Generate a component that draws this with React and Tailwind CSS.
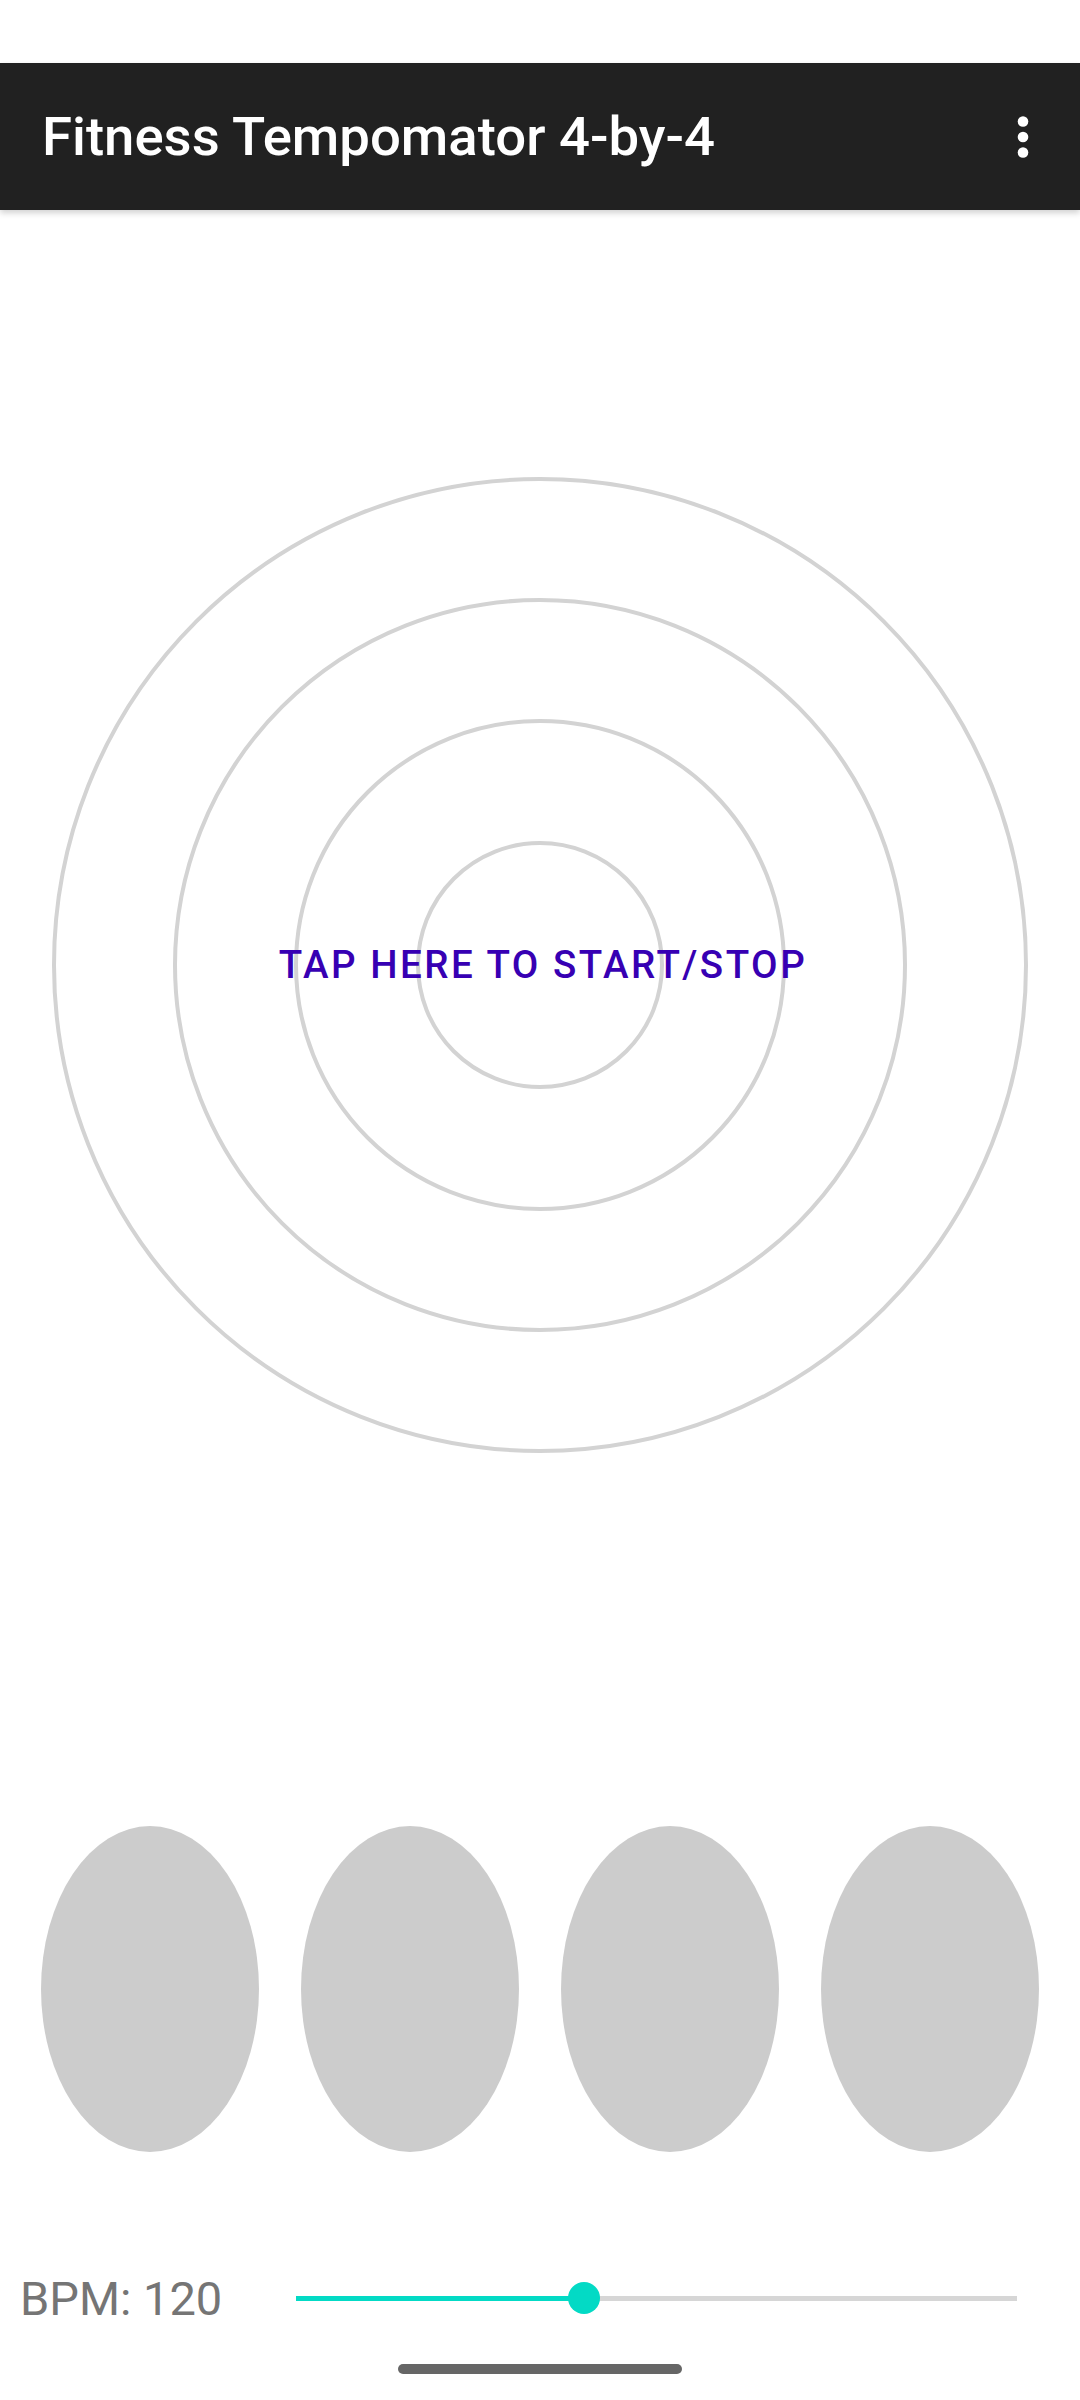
const RINGS = [486, 365, 244, 122];
const BEATS = [0, 1, 2, 3];

function Rings() {
  return (
    <svg width="976" height="976" viewBox="0 0 976 976" className="block">
      {RINGS.map(r => (
        <circle key={r} cx="488" cy="488" r={r} fill="none" stroke="#d3d3d3" strokeWidth="4" />
      ))}
    </svg>
  );
}

function MoreIcon() {
  return (
    <svg width="66" height="66" viewBox="0 0 66 66" fill="#ffffff">
      <circle cx="33" cy="17.5" r="5.3" />
      <circle cx="33" cy="33" r="5.3" />
      <circle cx="33" cy="48.5" r="5.3" />
    </svg>
  );
}

export default function App() {
  const bpm = 120;
  // slider position as fraction of the track
  const pct = 39.9;

  return (
    <div className="w-[1080px] h-[2400px] bg-white flex flex-col overflow-hidden font-['Roboto',_'Liberation_Sans',_sans-serif]">
      {/* status bar */}
      <div className="h-[63px] bg-white shrink-0" />

      {/* toolbar */}
      <div className="h-[147px] shrink-0 bg-[#212121] flex items-center justify-between pl-[42px] pr-[24px] shadow-[0_3px_6px_rgba(0,0,0,0.18)] relative z-10">
        <h1 className="text-white text-[54.5px] font-medium leading-none">Fitness Tempomator 4-by-4</h1>
        <MoreIcon />
      </div>

      {/* tap target */}
      <div className="mt-[267px] self-center relative w-[976px] h-[976px] shrink-0">
        <Rings />
        <div className="absolute inset-0 flex items-center justify-center pl-[6px]">
          <span className="text-[#3700b3] text-[38.5px] font-medium tracking-[2.5px] leading-none">
            TAP HERE TO START/STOP
          </span>
        </div>
      </div>

      {/* beat indicators */}
      <div className="mt-[373px] flex gap-[42px] px-[41px] shrink-0">
        {BEATS.map(b => (
          <div key={b} className="flex-1 h-[326px] rounded-[50%] bg-[#cccccc]" />
        ))}
      </div>

      {/* tempo row */}
      <div className="mt-[114px] h-[64px] flex items-center shrink-0">
        <span className="pl-[20px] w-[296px] text-[47px] text-[#757575] leading-none">BPM: {bpm}</span>
        <div className="relative w-[721px] h-[32px] flex items-center">
          <div className="w-full h-[5px] bg-[#d6d6d6] flex">
            <div className="h-full bg-[#03dac5]" style={{ width: `${pct}%` }} />
          </div>
          <div
            className="absolute top-0 w-[32px] h-[32px] rounded-full bg-[#03dac5] -translate-x-1/2"
            style={{ left: `${pct}%` }}
          />
        </div>
      </div>

      {/* gesture handle */}
      <div className="mt-[34px] self-center w-[284px] h-[10px] rounded-full bg-[#666666] shrink-0" />
    </div>
  );
}
